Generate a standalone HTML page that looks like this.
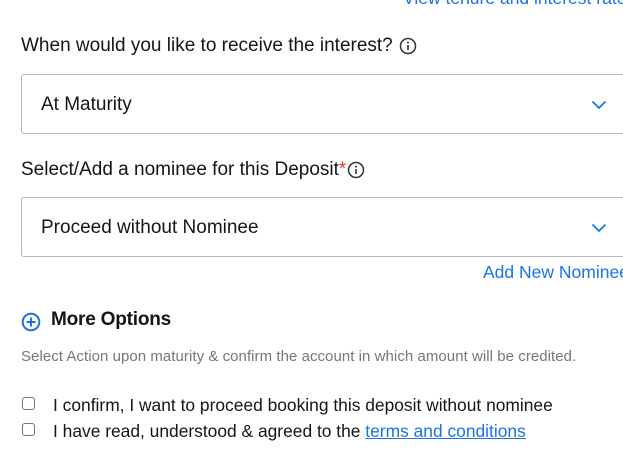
<!DOCTYPE html>
<html><head><style>
body{margin:0;width:623px;height:465px;overflow:hidden;background:#fff;font-family:"Liberation Sans",sans-serif;color:#151515;position:relative}
.a{position:absolute;white-space:nowrap}
.lbl{font-size:19px;letter-spacing:0;display:flex;align-items:center}
.lbl svg{margin-left:6px}
.box{position:absolute;left:21px;width:640px;height:60px;border:1px solid #b8b8b8;border-radius:3px;box-sizing:border-box}
.box span{position:absolute;left:19px;top:19px;font-size:19px}
.chev{position:absolute;left:569px;top:25px}
.blue{color:#1a73e8}
.cb{position:absolute;left:22px;width:13px;height:13px;border:1.3px solid #777;border-radius:3px;box-sizing:border-box}
.ct{font-size:17.4px}
</style></head><body>
<div class="a blue" style="left:403px;top:-12px;font-size:17.5px">View tenure and interest rate</div>
<div class="a lbl" style="left:21px;top:35px">When would you like to receive the interest?<svg width="18" height="18" viewBox="0 0 18 18"><circle cx="9" cy="9" r="7.5" fill="none" stroke="#333" stroke-width="1.5"/><rect x="8.2" y="8" width="1.6" height="5" fill="#333"/><circle cx="9" cy="5.6" r="1" fill="#333"/></svg></div>
<div class="box" style="top:74px"><span>At Maturity</span><svg class="chev" width="16" height="10" viewBox="0 0 16 10"><path d="M1.5 1.5L8 8l6.5-6.5" fill="none" stroke="#1a73e8" stroke-width="1.8"/></svg></div>
<div class="a lbl" style="left:21px;top:159px">Select/Add a nominee for this Deposit<span style="color:#e53935">*</span><svg style="margin-left:1px" width="18" height="18" viewBox="0 0 18 18"><circle cx="9" cy="9" r="7.5" fill="none" stroke="#333" stroke-width="1.5"/><rect x="8.2" y="8" width="1.6" height="5" fill="#333"/><circle cx="9" cy="5.6" r="1" fill="#333"/></svg></div>
<div class="box" style="top:197px"><span>Proceed without Nominee</span><svg class="chev" width="16" height="10" viewBox="0 0 16 10"><path d="M1.5 1.5L8 8l6.5-6.5" fill="none" stroke="#1a73e8" stroke-width="1.8"/></svg></div>
<div class="a blue" style="left:483px;top:262px;font-size:17.5px">Add New Nominee</div>
<svg class="a" style="left:21px;top:312px" width="20" height="20" viewBox="0 0 20 20"><circle cx="10" cy="10" r="8.3" fill="none" stroke="#1a73e8" stroke-width="2"/><path d="M10 5.5v9M5.5 10h9" stroke="#1a73e8" stroke-width="2"/></svg>
<div class="a" style="left:51px;top:309px;font-size:19px;font-weight:bold;letter-spacing:-0.2px">More Options</div>
<div class="a" style="left:21px;top:348px;font-size:15px;color:#777;letter-spacing:0.05px">Select Action upon maturity &amp; confirm the account in which amount will be credited.</div>
<div class="cb" style="top:397px"></div>
<div class="a ct" style="left:53px;top:395px">I confirm, I want to proceed booking this deposit without nominee</div>
<div class="cb" style="top:423px"></div>
<div class="a ct" style="left:53px;top:421px">I have read, understood &amp; agreed to the <span class="blue" style="text-decoration:underline">terms and conditions</span></div>
</body></html>
